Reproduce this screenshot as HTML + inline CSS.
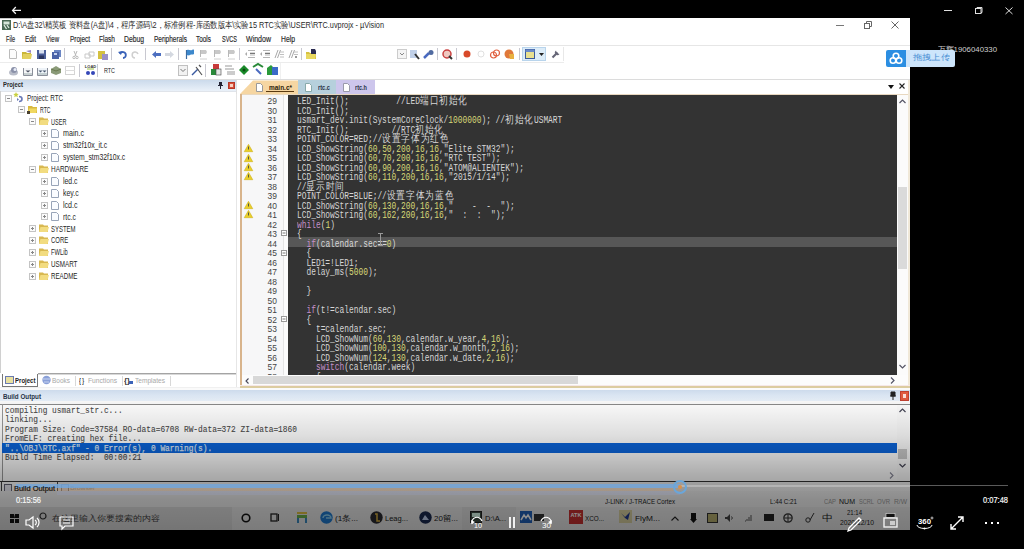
<!DOCTYPE html>
<html><head><meta charset="utf-8">
<style>
*{margin:0;padding:0;box-sizing:border-box}
html,body{width:1024px;height:549px;overflow:hidden;background:#000;font-family:"Liberation Sans",sans-serif}
.a{position:absolute}
svg.a{overflow:visible}
.t{position:absolute;white-space:pre;line-height:1;transform-origin:0 50%}
.code{position:absolute;white-space:pre;font-family:"Liberation Mono",monospace;font-size:10px;line-height:9.5px;transform-origin:0 0;transform:scaleX(0.788);color:#d6d6d6}
.code .n{color:#d8d878}
.code .k{color:#c490c8}
.cj{font-size:10.6px;letter-spacing:1.2px;line-height:0}
.bo{position:absolute;white-space:pre;font-family:"Liberation Mono",monospace;font-size:9.5px;line-height:9.5px;transform-origin:0 0;transform:scaleX(0.826);color:#4a4a4a;font-weight:normal;-webkit-text-stroke:0.1px #4a4a4a}
</style></head><body>

<div class="a" style="left:0px;top:18px;width:910px;height:512px;background:#fff"></div>
<div class="a" style="left:0px;top:18px;width:32px;height:1px;background:#c8c8c8"></div>
<svg class="a" style="left:2px;top:20px;" width="9" height="10" viewBox="0 0 9 10"><rect x="0" y="0" width="9" height="10" fill="#4a6a55"/><rect x="1.5" y="1.5" width="6" height="3" fill="#d6e6da"/><path d="M2 5l2.5 4M5 5l2 3" stroke="#e0ece4" stroke-width="1.3"/></svg>
<div class="t" style="left:13px;top:21.12px;color:#2a2a2a;font-family:'Liberation Sans',sans-serif;font-size:9px;;transform:scaleX(0.8131)">D:\A盘32\精英板 资料盘(A盘)\4，程序源码\2，标准例程-库函数版本\实验15 RTC实验\USER\RTC.uvprojx - µVision</div>
<div class="a" style="left:836px;top:25px;width:8px;height:1px;background:#777"></div>
<svg class="a" style="left:864px;top:21px;" width="8" height="8" viewBox="0 0 8 8"><rect x="0.5" y="2.5" width="5" height="5" fill="none" stroke="#666"/><path d="M2.5 2.5v-2h5v5h-2" fill="none" stroke="#666"/></svg>
<svg class="a" style="left:891px;top:21px;" width="8" height="8" viewBox="0 0 8 8"><path d="M0.5 0.5l7 7M7.5 0.5l-7 7" stroke="#666" stroke-width="1"/></svg>
<div class="t" style="left:6px;top:34.93px;color:#262626;font-family:'Liberation Sans',sans-serif;font-size:8.4px;-webkit-text-stroke:0.15px #262626;transform:scaleX(0.6667)">File</div>
<div class="t" style="left:25px;top:34.93px;color:#262626;font-family:'Liberation Sans',sans-serif;font-size:8.4px;-webkit-text-stroke:0.15px #262626;transform:scaleX(0.7619)">Edit</div>
<div class="t" style="left:46px;top:34.93px;color:#262626;font-family:'Liberation Sans',sans-serif;font-size:8.4px;-webkit-text-stroke:0.15px #262626;transform:scaleX(0.7216)">View</div>
<div class="t" style="left:70px;top:34.93px;color:#262626;font-family:'Liberation Sans',sans-serif;font-size:8.4px;-webkit-text-stroke:0.15px #262626;transform:scaleX(0.7669)">Project</div>
<div class="t" style="left:99px;top:34.93px;color:#262626;font-family:'Liberation Sans',sans-serif;font-size:8.4px;-webkit-text-stroke:0.15px #262626;transform:scaleX(0.7811)">Flash</div>
<div class="t" style="left:124px;top:34.93px;color:#262626;font-family:'Liberation Sans',sans-serif;font-size:8.4px;-webkit-text-stroke:0.15px #262626;transform:scaleX(0.8101)">Debug</div>
<div class="t" style="left:154px;top:34.93px;color:#262626;font-family:'Liberation Sans',sans-serif;font-size:8.4px;-webkit-text-stroke:0.15px #262626;transform:scaleX(0.7788)">Peripherals</div>
<div class="t" style="left:196px;top:34.93px;color:#262626;font-family:'Liberation Sans',sans-serif;font-size:8.4px;-webkit-text-stroke:0.15px #262626;transform:scaleX(0.7668)">Tools</div>
<div class="t" style="left:222px;top:34.93px;color:#262626;font-family:'Liberation Sans',sans-serif;font-size:8.4px;-webkit-text-stroke:0.15px #262626;transform:scaleX(0.6575)">SVCS</div>
<div class="t" style="left:246px;top:34.93px;color:#262626;font-family:'Liberation Sans',sans-serif;font-size:8.4px;-webkit-text-stroke:0.15px #262626;transform:scaleX(0.8390)">Window</div>
<div class="t" style="left:281px;top:34.93px;color:#262626;font-family:'Liberation Sans',sans-serif;font-size:8.4px;-webkit-text-stroke:0.15px #262626;transform:scaleX(0.8123)">Help</div>
<div class="a" style="left:0px;top:45px;width:910px;height:1px;background:#e6e6e6"></div>
<svg class="a" style="left:9px;top:49px;" width="8" height="10" viewBox="0 0 8 10"><path d="M0.5 0.5h5l2 2v7h-7z" fill="#fcfcfc" stroke="#bbb"/></svg>
<svg class="a" style="left:22px;top:50px;" width="10" height="9" viewBox="0 0 10 9"><path d="M0 2h4l1 1h4v6h-9z" fill="#c9b53a"/><path d="M4 1l5 -1v3" fill="#9a88c8"/><path d="M1 4h9l-1 5h-9z" fill="#e2d060"/></svg>
<svg class="a" style="left:37px;top:50px;" width="9" height="9" viewBox="0 0 9 9"><rect x="0" y="0" width="9" height="9" fill="#4c5f9a"/><rect x="2" y="0" width="5" height="3.5" fill="#d8e0f0"/><rect x="2" y="5.5" width="5" height="3.5" fill="#2a3560"/></svg>
<svg class="a" style="left:52px;top:50px;" width="9" height="9" viewBox="0 0 9 9"><path d="M2 0h7v7h-7z" fill="#6b86c4"/><path d="M0 2h7v7h-7z" fill="#4a63a8"/><path d="M2 3h3v2h-3z" fill="#c8d4f0"/></svg>
<div class="a" style="left:64px;top:48px;width:1px;height:12px;background:#c8c8d0"></div>
<svg class="a" style="left:73px;top:51px;" width="5" height="8" viewBox="0 0 5 8"><path d="M1 0l2 5M4 0l-2 5" stroke="#b8b8b8"/><circle cx="1" cy="6.5" r="1.2" fill="none" stroke="#bbb"/><circle cx="4" cy="6.5" r="1.2" fill="none" stroke="#bbb"/></svg>
<svg class="a" style="left:85px;top:51px;" width="9" height="8" viewBox="0 0 9 8"><path d="M0 3h5v4h-5zM4 1h5v4h-5z" fill="none" stroke="#c8c8c8"/></svg>
<svg class="a" style="left:98px;top:50px;" width="10" height="10" viewBox="0 0 10 10"><rect x="0" y="1" width="7" height="8" fill="#d4c040"/><rect x="4" y="4" width="6" height="6" fill="#9a90c8"/></svg>
<div class="a" style="left:111px;top:48px;width:1px;height:12px;background:#c8c8d0"></div>
<svg class="a" style="left:118px;top:50px;" width="8" height="9" viewBox="0 0 8 9"><path d="M2 4a3 3 0 1 1 3 4" stroke="#3a62b8" stroke-width="1.8" fill="none"/><path d="M0 2l3 3 1-4z" fill="#3a62b8"/></svg>
<svg class="a" style="left:132px;top:50px;" width="8" height="9" viewBox="0 0 8 9"><path d="M6 4a3 3 0 1 0 -3 4" stroke="#cfcfcf" stroke-width="1.5" fill="none"/></svg>
<div class="a" style="left:145px;top:48px;width:1px;height:12px;background:#c8c8d0"></div>
<svg class="a" style="left:152px;top:51px;" width="9" height="7" viewBox="0 0 9 7"><path d="M0 3.5l4-3.5v2h5v3h-5v2z" fill="#4d6fc0"/></svg>
<svg class="a" style="left:165px;top:51px;" width="9" height="7" viewBox="0 0 9 7"><path d="M9 3.5l-4-3.5v2h-5v3h5v2z" fill="#d4d8e0"/></svg>
<div class="a" style="left:178px;top:48px;width:1px;height:12px;background:#c8c8d0"></div>
<svg class="a" style="left:185px;top:49px;" width="10" height="11" viewBox="0 0 10 11"><path d="M1.5 1v9" stroke="#3a6aa0" stroke-width="1.2"/><path d="M2 1c2-1 3 1 5 0s2 0 2 0v4c-1 1-3 0-4 1s-3 0-3 0z" fill="#3d88cc"/></svg>
<svg class="a" style="left:199px;top:49px;" width="10" height="11" viewBox="0 0 10 11"><path d="M1.5 1v7" stroke="#b8b8b8"/><path d="M2 1h5l1 2-1 2h-5z" fill="#c8c8c8"/><path d="M1 10h7" stroke="#d0d0d0"/></svg>
<svg class="a" style="left:213px;top:49px;" width="10" height="11" viewBox="0 0 10 11"><path d="M1.5 1v7" stroke="#b8b8b8"/><path d="M2 1h5l1 2-1 2h-5z" fill="#c8c8c8"/><path d="M1 10h7" stroke="#d0d0d0"/></svg>
<svg class="a" style="left:227px;top:49px;" width="10" height="11" viewBox="0 0 10 11"><path d="M1.5 1v7" stroke="#b8b8b8"/><path d="M2 1h5l1 2-1 2h-5z" fill="#c8c8c8"/><path d="M1 10h7" stroke="#d0d0d0"/></svg>
<div class="a" style="left:239px;top:48px;width:1px;height:12px;background:#c8c8d0"></div>
<svg class="a" style="left:245px;top:49px;" width="10" height="10" viewBox="0 0 10 10"><path d="M3 1.5h7M5 4h5M5 6h5M3 8.5h7" stroke="#b4b4b4"/><path d="M5 4.5h5" stroke="#777"/><path d="M0 5l2-2v4z" fill="#aaa"/></svg>
<svg class="a" style="left:260px;top:49px;" width="10" height="10" viewBox="0 0 10 10"><path d="M3 1.5h7M5 4h5M5 6h5M3 8.5h7" stroke="#b4b4b4"/><path d="M5 4.5h5" stroke="#777"/><path d="M0 5l2-2v4z" fill="#aaa"/></svg>
<svg class="a" style="left:274px;top:49px;" width="10" height="10" viewBox="0 0 10 10"><path d="M1 9l3-8M3.5 9l3-8" stroke="#a8a8a8"/><path d="M6 3h4M6 5.5h4M6 8h4" stroke="#c0c0c0"/></svg>
<svg class="a" style="left:288px;top:49px;" width="10" height="10" viewBox="0 0 10 10"><path d="M1 9l3-8M3.5 9l3-8" stroke="#a8a8a8"/><path d="M6 3h4M6 5.5h4" stroke="#c0c0c0"/><path d="M7 7l2 2M9 7l-2 2" stroke="#999"/></svg>
<div class="a" style="left:301px;top:48px;width:1px;height:12px;background:#c8c8d0"></div>
<svg class="a" style="left:306px;top:49px;" width="11" height="10" viewBox="0 0 11 10"><path d="M0 3h3l1 1h6v6h-10z" fill="#d6c040"/><path d="M5 0h4l1 2v4h-5z" fill="#2a2a50"/><path d="M0 5h10l-1 5h-9z" fill="#e8d860"/></svg>
<svg class="a" style="left:397px;top:49px;" width="10" height="10" viewBox="0 0 10 10"><rect x="0.5" y="0.5" width="9" height="9" fill="#f4f4f4" stroke="#ccc"/><path d="M3 4l2 2 2-2" stroke="#888" fill="none"/></svg>
<svg class="a" style="left:410px;top:49px;" width="10" height="11" viewBox="0 0 10 11"><rect x="0" y="1" width="7" height="8" fill="#c0d0e8"/><path d="M5 5l4 5" stroke="#333" stroke-width="2"/></svg>
<svg class="a" style="left:424px;top:50px;" width="10" height="9" viewBox="0 0 10 9"><path d="M0 8l5-5" stroke="#4a6ac0" stroke-width="2.5"/><circle cx="7" cy="2.5" r="2.5" fill="#506aa0"/></svg>
<div class="a" style="left:437px;top:48px;width:1px;height:12px;background:#c8c8d0"></div>
<svg class="a" style="left:442px;top:49px;" width="11" height="11" viewBox="0 0 11 11"><circle cx="5" cy="5" r="4" fill="#f0c8c0" stroke="#c84040" stroke-width="1.5"/><path d="M7 7l3 3" stroke="#333" stroke-width="2"/></svg>
<div class="a" style="left:456px;top:48px;width:1px;height:12px;background:#c8c8d0"></div>
<svg class="a" style="left:463px;top:50px;" width="8" height="8" viewBox="0 0 8 8"><circle cx="4" cy="4" r="3.5" fill="#d84a2a"/></svg>
<svg class="a" style="left:477px;top:50px;" width="8" height="8" viewBox="0 0 8 8"><circle cx="4" cy="4" r="3" fill="none" stroke="#e0e0e0"/></svg>
<svg class="a" style="left:490px;top:49px;" width="10" height="10" viewBox="0 0 10 10"><circle cx="3.5" cy="6" r="3" fill="none" stroke="#e06040" stroke-width="1.2"/><circle cx="6.5" cy="4" r="3" fill="none" stroke="#e06040" stroke-width="1.2"/></svg>
<svg class="a" style="left:504px;top:49px;" width="10" height="10" viewBox="0 0 10 10"><circle cx="5" cy="5" r="4.5" fill="#e0783a"/><path d="M5 5h5v5h-4z" fill="#e8b040"/></svg>
<div class="a" style="left:519px;top:48px;width:1px;height:12px;background:#c8c8d0"></div>
<div class="a" style="left:522px;top:47px;width:24px;height:14px;background:#dcecf8;border:1px solid #b8d4ec"></div>
<svg class="a" style="left:525px;top:49px;" width="10" height="10" viewBox="0 0 10 10"><rect x="0.5" y="0.5" width="9" height="9" fill="#e8e090" stroke="#3a5a9a"/><rect x="0.5" y="0.5" width="9" height="2.5" fill="#6a8ac8"/></svg>
<svg class="a" style="left:539px;top:53px;" width="5" height="3" viewBox="0 0 5 3"><path d="M0 0h5l-2.5 3z" fill="#222"/></svg>
<svg class="a" style="left:551px;top:49px;" width="10" height="10" viewBox="0 0 10 10"><path d="M1.5 8.5l5-5" stroke="#667" stroke-width="2.2"/><path d="M5 1.5a2.5 2.5 0 1 0 3.5 3.5l-1.5-0.5-1.5-1.5z" fill="#667"/></svg>
<div class="a" style="left:563px;top:47px;width:1px;height:14px;background:#e8e8e8"></div>
<div class="a" style="left:0px;top:62px;width:564px;height:1px;background:#ececec"></div>
<svg class="a" style="left:9px;top:66px;" width="9" height="10" viewBox="0 0 9 10"><ellipse cx="4.5" cy="6.5" rx="4.5" ry="3" fill="#b8bcc8"/><circle cx="5" cy="4" r="3" fill="#8a90a8"/><circle cx="6" cy="3.5" r="1.5" fill="#e8ecf8"/></svg>
<svg class="a" style="left:23px;top:66px;" width="10" height="10" viewBox="0 0 10 10"><path d="M0.5 2v7.5h9v-7.5" stroke="#8a8f9a" fill="#f6f7f9"/><path d="M2.5 4.5l2.5 2 2.5-2z" fill="#4a5060"/><path d="M1 8h8" stroke="#9aa"/></svg>
<svg class="a" style="left:37px;top:66px;" width="11" height="10" viewBox="0 0 11 10"><path d="M0.5 2v7.5h10v-7.5" stroke="#8a8f9a" fill="#eef3f8"/><path d="M1.5 4.5l2 2 2-2zM5.5 4.5l2 2 2-2z" fill="#4a5a70"/><path d="M1 8h9" stroke="#9aa"/></svg>
<svg class="a" style="left:51px;top:65px;" width="10" height="10" viewBox="0 0 10 10"><path d="M0 4l5-3 5 3v4l-5 2-5-2z" fill="#8a9a78"/><path d="M0 4l5 2 5-2" stroke="#6a7a50" fill="none"/></svg>
<svg class="a" style="left:65px;top:66px;" width="10" height="9" viewBox="0 0 10 9"><rect x="0.5" y="0.5" width="9" height="8" fill="none" stroke="#d4d4d4"/><path d="M0 4.5h10" stroke="#dcdcdc"/></svg>
<div class="a" style="left:79px;top:64px;width:1px;height:13px;background:#c8c8d0"></div>
<svg class="a" style="left:85px;top:64px;" width="11" height="12" viewBox="0 0 11 12"><text x="5.5" y="4" font-size="4" text-anchor="middle" font-family="Liberation Sans" font-weight="bold" fill="#333">LOAD</text><circle cx="3" cy="9" r="2" fill="#3446b8"/><circle cx="8" cy="9" r="2" fill="#3446b8"/><path d="M2 5h7" stroke="#9ac040"/></svg>
<div class="a" style="left:97px;top:64px;width:1px;height:13px;background:#c8c8d0"></div>
<div class="t" style="left:104px;top:66.60px;color:#222;font-family:'Liberation Sans',sans-serif;font-size:7.5px;;transform:scaleX(0.7198)">RTC</div>
<svg class="a" style="left:178px;top:65px;" width="10" height="11" viewBox="0 0 10 11"><rect x="0.5" y="0.5" width="9" height="10" fill="#f2f2f2" stroke="#c0c0c0"/><path d="M2.5 4l2.5 2.5 2.5-2.5" stroke="#777" fill="none"/></svg>
<svg class="a" style="left:192px;top:65px;" width="11" height="11" viewBox="0 0 11 11"><path d="M0 10l6-6" stroke="#3a5aa0" stroke-width="1.5"/><path d="M4 2l6 8M7 0l2 2" stroke="#555" stroke-width="1.2"/></svg>
<div class="a" style="left:205px;top:64px;width:1px;height:13px;background:#c8c8d0"></div>
<svg class="a" style="left:211px;top:64px;" width="10" height="11" viewBox="0 0 10 11"><rect x="2" y="0" width="6" height="5" fill="#c83a3a"/><rect x="0" y="5" width="5" height="6" fill="#2a8a3a"/><rect x="5" y="5" width="5" height="6" fill="#e8e8e8" stroke="#444" stroke-width=".6"/></svg>
<svg class="a" style="left:225px;top:65px;" width="10" height="10" viewBox="0 0 10 10"><path d="M0 1h7M0 4h9M2 7h8M2 9h8" stroke="#999"/></svg>
<svg class="a" style="left:239px;top:65px;" width="10" height="10" viewBox="0 0 10 10"><path d="M5 0l5 5-5 5-5-5z" fill="#1a8a2a"/><circle cx="5" cy="5" r="1.5" fill="#0a4a10"/></svg>
<svg class="a" style="left:253px;top:64px;" width="11" height="11" viewBox="0 0 11 11"><path d="M0 3l5-3 5 3" stroke="#2a8a3a" stroke-width="2" fill="none"/><path d="M3 5l5 5" stroke="#4a6ac0" stroke-width="2"/></svg>
<svg class="a" style="left:267px;top:64px;" width="11" height="11" viewBox="0 0 11 11"><path d="M0 4l4-3 3 3v7h-7z" fill="#2a9a3a"/><rect x="5" y="3" width="6" height="8" fill="#3a6ac8"/></svg>
<div class="a" style="left:280px;top:63px;width:1px;height:16px;background:#f0f0f0"></div>
<div class="a" style="left:0px;top:79px;width:910px;height:1px;background:#dcdcdc"></div>
<div class="a" style="left:0px;top:80px;width:236px;height:11px;background:linear-gradient(#cbdaeb,#eaf1f9)"></div>
<div class="a" style="left:0px;top:91px;width:236px;height:1px;background:#e0e4ea"></div>
<div class="t" style="left:3px;top:81.14px;color:#2a2a2a;font-family:'Liberation Sans',sans-serif;font-size:8px;font-weight:bold;transform:scaleX(0.7373)">Project</div>
<svg class="a" style="left:218px;top:82px;" width="5" height="7" viewBox="0 0 5 7"><path d="M1 0h3v3.5h-3z" fill="#223"/><path d="M0 3.5h5M2.5 3.5v3.5" stroke="#223"/></svg>
<div class="a" style="left:228px;top:82px;width:7px;height:7px;background:#d8503a;border:1px solid #b83828"></div>
<div class="a" style="left:230px;top:84px;width:3px;height:3px;background:#f8d0c0"></div>
<div class="a" style="left:0px;top:91px;width:1px;height:282px;background:#d0d0d0"></div>
<div class="a" style="left:236px;top:80px;width:1px;height:308px;background:#e0e0e0"></div>
<svg class="a" style="left:5px;top:95px;" width="7" height="7" viewBox="0 0 7 7"><rect x="0.5" y="0.5" width="6" height="6" fill="#fbfbfb" stroke="#c4c4c4"/><path d="M2 3.5h3" stroke="#888" stroke-width="1"/></svg>
<svg class="a" style="left:13px;top:92px;" width="11" height="11" viewBox="0 0 11 11"><path d="M3 0l0.8 1.8 2 .2-1.5 1.3.5 2-1.8-1-1.8 1 .5-2-1.5-1.3 2-.2z" fill="#c8d040"/><path d="M6 4.5c2 0 3 1 3 2.5s-1 2.5-3 2.5" stroke="#6a7ab8" stroke-width="1.6" fill="none"/><path d="M4 6l2 1.5-2 1.5" fill="#6a7ab8"/></svg>
<div class="t" style="left:27.3px;top:94.84px;color:#262626;font-family:'Liberation Sans',sans-serif;font-size:8.2px;;transform:scaleX(0.7748)">Project: RTC</div>
<svg class="a" style="left:18px;top:106px;" width="7" height="7" viewBox="0 0 7 7"><rect x="0.5" y="0.5" width="6" height="6" fill="#fbfbfb" stroke="#c4c4c4"/><path d="M2 3.5h3" stroke="#888" stroke-width="1"/></svg>
<svg class="a" style="left:27px;top:105px;" width="10" height="9" viewBox="0 0 10 9"><path d="M1 1h4l1 1h4v6h-9z" fill="#d8b840"/><path d="M2 3.5h8l-1 4.5h-8z" fill="#f0d860"/><path d="M0 6h3v3h-3z" fill="#4a4030"/></svg>
<div class="t" style="left:39.5px;top:106.72px;color:#262626;font-family:'Liberation Sans',sans-serif;font-size:8.2px;;transform:scaleX(0.6292)">RTC</div>
<svg class="a" style="left:29px;top:118px;" width="7" height="7" viewBox="0 0 7 7"><rect x="0.5" y="0.5" width="6" height="6" fill="#fbfbfb" stroke="#c4c4c4"/><path d="M2 3.5h3" stroke="#888" stroke-width="1"/></svg>
<svg class="a" style="left:39px;top:117px;" width="10" height="8" viewBox="0 0 10 8"><path d="M0 0.5h4l1 1h4v6.5h-9z" fill="#d8b850"/><path d="M1.5 3h8.5l-1.5 5h-8.5z" fill="#f2dc80"/></svg>
<div class="t" style="left:51.2px;top:118.60px;color:#262626;font-family:'Liberation Sans',sans-serif;font-size:8.2px;;transform:scaleX(0.6769)">USER</div>
<svg class="a" style="left:41px;top:130px;" width="7" height="7" viewBox="0 0 7 7"><rect x="0.5" y="0.5" width="6" height="6" fill="#fbfbfb" stroke="#c4c4c4"/><path d="M2 3.5h3M3.5 2v3" stroke="#888" stroke-width="1"/></svg>
<svg class="a" style="left:51px;top:129px;" width="8" height="9" viewBox="0 0 8 9"><path d="M0.5 0.5h5l2 2v6h-7z" fill="#fafcff" stroke="#98a4b8"/></svg>
<div class="t" style="left:62.8px;top:130.48px;color:#262626;font-family:'Liberation Sans',sans-serif;font-size:8.2px;;transform:scaleX(0.8705)">main.c</div>
<svg class="a" style="left:41px;top:142px;" width="7" height="7" viewBox="0 0 7 7"><rect x="0.5" y="0.5" width="6" height="6" fill="#fbfbfb" stroke="#c4c4c4"/><path d="M2 3.5h3M3.5 2v3" stroke="#888" stroke-width="1"/></svg>
<svg class="a" style="left:51px;top:141px;" width="8" height="9" viewBox="0 0 8 9"><path d="M0.5 0.5h5l2 2v6h-7z" fill="#fafcff" stroke="#98a4b8"/></svg>
<div class="t" style="left:62.8px;top:142.36px;color:#262626;font-family:'Liberation Sans',sans-serif;font-size:8.2px;;transform:scaleX(0.8372)">stm32f10x_it.c</div>
<svg class="a" style="left:41px;top:154px;" width="7" height="7" viewBox="0 0 7 7"><rect x="0.5" y="0.5" width="6" height="6" fill="#fbfbfb" stroke="#c4c4c4"/><path d="M2 3.5h3M3.5 2v3" stroke="#888" stroke-width="1"/></svg>
<svg class="a" style="left:51px;top:153px;" width="8" height="9" viewBox="0 0 8 9"><path d="M0.5 0.5h5l2 2v6h-7z" fill="#fafcff" stroke="#98a4b8"/></svg>
<div class="t" style="left:62.8px;top:154.24px;color:#262626;font-family:'Liberation Sans',sans-serif;font-size:8.2px;;transform:scaleX(0.8335)">system_stm32f10x.c</div>
<svg class="a" style="left:29px;top:166px;" width="7" height="7" viewBox="0 0 7 7"><rect x="0.5" y="0.5" width="6" height="6" fill="#fbfbfb" stroke="#c4c4c4"/><path d="M2 3.5h3" stroke="#888" stroke-width="1"/></svg>
<svg class="a" style="left:39px;top:165px;" width="10" height="8" viewBox="0 0 10 8"><path d="M0 0.5h4l1 1h4v6.5h-9z" fill="#d8b850"/><path d="M1.5 3h8.5l-1.5 5h-8.5z" fill="#f2dc80"/></svg>
<div class="t" style="left:51.2px;top:166.12px;color:#262626;font-family:'Liberation Sans',sans-serif;font-size:8.2px;;transform:scaleX(0.7879)">HARDWARE</div>
<svg class="a" style="left:41px;top:178px;" width="7" height="7" viewBox="0 0 7 7"><rect x="0.5" y="0.5" width="6" height="6" fill="#fbfbfb" stroke="#c4c4c4"/><path d="M2 3.5h3M3.5 2v3" stroke="#888" stroke-width="1"/></svg>
<svg class="a" style="left:51px;top:177px;" width="8" height="9" viewBox="0 0 8 9"><path d="M0.5 0.5h5l2 2v6h-7z" fill="#fafcff" stroke="#98a4b8"/></svg>
<div class="t" style="left:62.8px;top:178.00px;color:#262626;font-family:'Liberation Sans',sans-serif;font-size:8.2px;;transform:scaleX(0.8383)">led.c</div>
<svg class="a" style="left:41px;top:190px;" width="7" height="7" viewBox="0 0 7 7"><rect x="0.5" y="0.5" width="6" height="6" fill="#fbfbfb" stroke="#c4c4c4"/><path d="M2 3.5h3M3.5 2v3" stroke="#888" stroke-width="1"/></svg>
<svg class="a" style="left:51px;top:189px;" width="8" height="9" viewBox="0 0 8 9"><path d="M0.5 0.5h5l2 2v6h-7z" fill="#fafcff" stroke="#98a4b8"/></svg>
<div class="t" style="left:62.8px;top:189.88px;color:#262626;font-family:'Liberation Sans',sans-serif;font-size:8.2px;;transform:scaleX(0.8425)">key.c</div>
<svg class="a" style="left:41px;top:202px;" width="7" height="7" viewBox="0 0 7 7"><rect x="0.5" y="0.5" width="6" height="6" fill="#fbfbfb" stroke="#c4c4c4"/><path d="M2 3.5h3M3.5 2v3" stroke="#888" stroke-width="1"/></svg>
<svg class="a" style="left:51px;top:201px;" width="8" height="9" viewBox="0 0 8 9"><path d="M0.5 0.5h5l2 2v6h-7z" fill="#fafcff" stroke="#98a4b8"/></svg>
<div class="t" style="left:62.8px;top:201.76px;color:#262626;font-family:'Liberation Sans',sans-serif;font-size:8.2px;;transform:scaleX(0.8609)">lcd.c</div>
<svg class="a" style="left:41px;top:213px;" width="7" height="7" viewBox="0 0 7 7"><rect x="0.5" y="0.5" width="6" height="6" fill="#fbfbfb" stroke="#c4c4c4"/><path d="M2 3.5h3M3.5 2v3" stroke="#888" stroke-width="1"/></svg>
<svg class="a" style="left:51px;top:212px;" width="8" height="9" viewBox="0 0 8 9"><path d="M0.5 0.5h5l2 2v6h-7z" fill="#fafcff" stroke="#98a4b8"/></svg>
<div class="t" style="left:62.8px;top:213.64px;color:#262626;font-family:'Liberation Sans',sans-serif;font-size:8.2px;;transform:scaleX(0.8404)">rtc.c</div>
<svg class="a" style="left:29px;top:225px;" width="7" height="7" viewBox="0 0 7 7"><rect x="0.5" y="0.5" width="6" height="6" fill="#fbfbfb" stroke="#c4c4c4"/><path d="M2 3.5h3M3.5 2v3" stroke="#888" stroke-width="1"/></svg>
<svg class="a" style="left:39px;top:224px;" width="10" height="8" viewBox="0 0 10 8"><path d="M0 0.5h4l1 1h4v6.5h-9z" fill="#d8b850"/><path d="M1.5 3h8.5l-1.5 5h-8.5z" fill="#f2dc80"/></svg>
<div class="t" style="left:51.2px;top:225.52px;color:#262626;font-family:'Liberation Sans',sans-serif;font-size:8.2px;;transform:scaleX(0.7306)">SYSTEM</div>
<svg class="a" style="left:29px;top:237px;" width="7" height="7" viewBox="0 0 7 7"><rect x="0.5" y="0.5" width="6" height="6" fill="#fbfbfb" stroke="#c4c4c4"/><path d="M2 3.5h3M3.5 2v3" stroke="#888" stroke-width="1"/></svg>
<svg class="a" style="left:39px;top:236px;" width="10" height="8" viewBox="0 0 10 8"><path d="M0 0.5h4l1 1h4v6.5h-9z" fill="#d8b850"/><path d="M1.5 3h8.5l-1.5 5h-8.5z" fill="#f2dc80"/></svg>
<div class="t" style="left:51.2px;top:237.40px;color:#262626;font-family:'Liberation Sans',sans-serif;font-size:8.2px;;transform:scaleX(0.7313)">CORE</div>
<svg class="a" style="left:29px;top:249px;" width="7" height="7" viewBox="0 0 7 7"><rect x="0.5" y="0.5" width="6" height="6" fill="#fbfbfb" stroke="#c4c4c4"/><path d="M2 3.5h3M3.5 2v3" stroke="#888" stroke-width="1"/></svg>
<svg class="a" style="left:39px;top:248px;" width="10" height="8" viewBox="0 0 10 8"><path d="M0 0.5h4l1 1h4v6.5h-9z" fill="#d8b850"/><path d="M1.5 3h8.5l-1.5 5h-8.5z" fill="#f2dc80"/></svg>
<div class="t" style="left:51.2px;top:249.28px;color:#262626;font-family:'Liberation Sans',sans-serif;font-size:8.2px;;transform:scaleX(0.7017)">FWLib</div>
<svg class="a" style="left:29px;top:261px;" width="7" height="7" viewBox="0 0 7 7"><rect x="0.5" y="0.5" width="6" height="6" fill="#fbfbfb" stroke="#c4c4c4"/><path d="M2 3.5h3M3.5 2v3" stroke="#888" stroke-width="1"/></svg>
<svg class="a" style="left:39px;top:260px;" width="10" height="8" viewBox="0 0 10 8"><path d="M0 0.5h4l1 1h4v6.5h-9z" fill="#d8b850"/><path d="M1.5 3h8.5l-1.5 5h-8.5z" fill="#f2dc80"/></svg>
<div class="t" style="left:51.2px;top:261.16px;color:#262626;font-family:'Liberation Sans',sans-serif;font-size:8.2px;;transform:scaleX(0.7670)">USMART</div>
<svg class="a" style="left:29px;top:273px;" width="7" height="7" viewBox="0 0 7 7"><rect x="0.5" y="0.5" width="6" height="6" fill="#fbfbfb" stroke="#c4c4c4"/><path d="M2 3.5h3M3.5 2v3" stroke="#888" stroke-width="1"/></svg>
<svg class="a" style="left:39px;top:272px;" width="10" height="8" viewBox="0 0 10 8"><path d="M0 0.5h4l1 1h4v6.5h-9z" fill="#d8b850"/><path d="M1.5 3h8.5l-1.5 5h-8.5z" fill="#f2dc80"/></svg>
<div class="t" style="left:51.2px;top:273.04px;color:#262626;font-family:'Liberation Sans',sans-serif;font-size:8.2px;;transform:scaleX(0.7536)">README</div>
<div class="a" style="left:38px;top:373px;width:199px;height:1px;background:#a4a4a4"></div>
<div class="a" style="left:38px;top:374px;width:199px;height:1px;background:#d8d8d8"></div>
<div class="a" style="left:1px;top:373px;width:37px;height:1px;background:#fff"></div>
<div class="a" style="left:2px;top:374px;width:36px;height:13px;background:#fff;border-left:1px solid #777;border-right:1px solid #777;border-bottom:1px solid #777"></div>
<svg class="a" style="left:5px;top:376px;" width="9" height="8" viewBox="0 0 9 8"><rect x="0.5" y="0.5" width="8" height="7" fill="#e8e0a0" stroke="#6a7ab0"/></svg>
<div class="t" style="left:14.5px;top:376.60px;color:#222;font-family:'Liberation Sans',sans-serif;font-size:7.5px;font-weight:bold;transform:scaleX(0.8059)">Project</div>
<svg class="a" style="left:42px;top:375px;" width="9" height="10" viewBox="0 0 9 10"><circle cx="4.5" cy="5" r="4.2" fill="#8aa0d8"/><path d="M1 4h7M2 7h5" stroke="#c8d4f0"/></svg>
<div class="t" style="left:52px;top:376.60px;color:#a8a8a8;font-family:'Liberation Sans',sans-serif;font-size:7.5px;;transform:scaleX(0.8629)">Books</div>
<div class="a" style="left:75px;top:376px;width:1px;height:10px;background:#d8d8d8"></div>
<div class="t" style="left:79px;top:376.60px;color:#333;font-family:'Liberation Sans',sans-serif;font-size:7.5px;font-weight:bold;transform:scaleX(0.6312)">{ }</div>
<div class="t" style="left:88px;top:376.60px;color:#a8a8a8;font-family:'Liberation Sans',sans-serif;font-size:7.5px;;transform:scaleX(0.8915)">Functions</div>
<div class="a" style="left:122px;top:376px;width:1px;height:10px;background:#d8d8d8"></div>
<div class="t" style="left:124px;top:376.60px;color:#333;font-family:'Liberation Sans',sans-serif;font-size:7.5px;font-weight:bold;transform:scaleX(1.0267)">{}</div>
<div class="a" style="left:129px;top:381px;width:4px;height:3px;background:#3a62b8"></div>
<div class="t" style="left:135px;top:376.60px;color:#a8a8a8;font-family:'Liberation Sans',sans-serif;font-size:7.5px;;transform:scaleX(0.8775)">Templates</div>
<div class="a" style="left:170px;top:376px;width:1px;height:10px;background:#d8d8d8"></div>
<div class="a" style="left:240px;top:80px;width:670px;height:14px;background:#fff"></div>
<svg class="a" style="left:240px;top:80px;" width="58" height="14" viewBox="0 0 58 14"><path d="M0 14l13-13.5h45v13.5z" fill="#f6d6a2"/></svg>
<svg class="a" style="left:256px;top:83px;" width="7" height="9" viewBox="0 0 7 9"><path d="M0.5 0.5h4l2 2v6h-6z" fill="#fff" stroke="#999"/></svg>
<div class="t" style="left:269px;top:83.50px;color:#2a1a08;font-family:'Liberation Sans',sans-serif;font-size:7.5px;font-weight:bold;transform:scaleX(0.8618)">main.c*</div>
<div class="a" style="left:266px;top:91px;width:28px;height:1px;background:#5a3a10"></div>
<div class="a" style="left:298px;top:80px;width:38px;height:14px;background:#b6d0dc"></div>
<svg class="a" style="left:305px;top:83px;" width="7" height="9" viewBox="0 0 7 9"><path d="M0.5 0.5h4l2 2v6h-6z" fill="#fff" stroke="#8aa"/></svg>
<div class="t" style="left:318px;top:83.50px;color:#2a3448;font-family:'Liberation Sans',sans-serif;font-size:7.5px;font-weight:bold;transform:scaleX(0.7574)">rtc.c</div>
<div class="a" style="left:336px;top:80px;width:39px;height:14px;background:#cdc6ec"></div>
<svg class="a" style="left:343px;top:83px;" width="7" height="9" viewBox="0 0 7 9"><path d="M0.5 0.5h4l2 2v6h-6z" fill="#fff" stroke="#99a"/></svg>
<div class="t" style="left:355px;top:83.50px;color:#2a3448;font-family:'Liberation Sans',sans-serif;font-size:7.5px;font-weight:bold;transform:scaleX(0.7378)">rtc.h</div>
<svg class="a" style="left:888px;top:85px;" width="6" height="4" viewBox="0 0 6 4"><path d="M0 0h6l-3 4z" fill="#111"/></svg>
<svg class="a" style="left:899px;top:83px;" width="6" height="6" viewBox="0 0 6 6"><path d="M0.5 0.5l5 5M5.5 0.5l-5 5" stroke="#222" stroke-width="1.1"/></svg>
<div class="a" style="left:240px;top:94px;width:670px;height:1px;background:#e8d8c0"></div>
<div class="a" style="left:236px;top:94px;width:1px;height:293px;background:#e6e6e6"></div>
<div class="a" style="left:240px;top:94px;width:2px;height:293px;background:#d8b48c"></div>
<div class="a" style="left:242px;top:95px;width:41px;height:280px;background:#f7f7f8"></div>
<div class="a" style="left:283px;top:95px;width:5px;height:280px;background:#fbfbfb"></div>
<div class="a" style="left:283px;top:95px;width:1px;height:280px;background:#e4e4e4"></div>
<div class="a" style="left:288px;top:95px;width:609px;height:280px;background:#333333"></div>
<div class="a" style="left:288px;top:237px;width:609px;height:10px;background:#575757"></div>
<div class="a" style="left:897px;top:95px;width:11px;height:280px;background:#fbfbfb"></div>
<div class="a" style="left:908px;top:80px;width:2px;height:308px;background:#f0e8d8"></div>
<svg class="a" style="left:899px;top:99px;" width="7" height="5" viewBox="0 0 7 5"><path d="M0.5 4l3-3 3 3" stroke="#556" fill="none" stroke-width="1.2"/></svg>
<div class="a" style="left:898px;top:187px;width:9px;height:82px;background:#dadada"></div>
<svg class="a" style="left:899px;top:364px;" width="7" height="5" viewBox="0 0 7 5"><path d="M0.5 1l3 3 3-3" stroke="#556" fill="none" stroke-width="1.2"/></svg>
<div class="a" style="left:242px;top:375px;width:666px;height:10px;background:#fcfcfc"></div>
<svg class="a" style="left:245px;top:378px;" width="5" height="6" viewBox="0 0 5 6"><path d="M3.5 0.5l-2.5 2.5 2.5 2.5" stroke="#445" fill="none" stroke-width="1.1"/></svg>
<div class="a" style="left:253px;top:376px;width:325px;height:8px;background:#d8d8d8"></div>
<svg class="a" style="left:890px;top:377px;" width="5" height="7" viewBox="0 0 5 7"><path d="M1 0.5l3 3-3 3" stroke="#556" fill="none" stroke-width="1.2"/></svg>
<div class="a" style="left:240px;top:385px;width:670px;height:1px;background:#f6e8e8"></div>
<div class="a" style="left:240px;top:386px;width:670px;height:2px;background:#dccca0"></div>
<div class="a" style="left:0px;top:387px;width:240px;height:1px;background:#f0f0f0"></div>
<div class="a" style="left:242px;top:95px;width:41px;height:280px;overflow:hidden"><div style="position:absolute;right:6px;top:1.2px;width:30px;text-align:right;white-space:pre;font-family:'Liberation Sans',sans-serif;font-size:9.6px;line-height:9.5px;color:#444;transform:scaleX(0.88);transform-origin:100% 0">29
30
31
32
33
34
35
36
37
38
39
40
41
42
43
44
45
46
47
48
49
50
51
52
53
54
55
56
57
58</div></div>
<svg class="a" style="left:281px;top:230px;" width="6" height="6" viewBox="0 0 6 6"><rect x="0.5" y="0.5" width="5" height="5" fill="#fff" stroke="#999"/><path d="M1.5 3h3" stroke="#555" stroke-width=".8"/></svg>
<svg class="a" style="left:281px;top:250px;" width="6" height="6" viewBox="0 0 6 6"><rect x="0.5" y="0.5" width="5" height="5" fill="#fff" stroke="#999"/><path d="M1.5 3h3" stroke="#555" stroke-width=".8"/></svg>
<svg class="a" style="left:281px;top:316px;" width="6" height="6" viewBox="0 0 6 6"><rect x="0.5" y="0.5" width="5" height="5" fill="#fff" stroke="#999"/><path d="M1.5 3h3" stroke="#555" stroke-width=".8"/></svg>
<div class="a" style="left:284px;top:380px;width:1px;height:0px;"></div>
<div class="a" style="left:288px;top:95px;width:609px;height:280px;overflow:hidden"><div class="code" style="left:8.6px;top:2px">LED_Init();          //LED<span class="cj">端口初始化</span>
LCD_Init();
usmart_dev.init(SystemCoreClock/<span class="n">1000000</span>); //<span class="cj">初始化</span>USMART
RTC_Init();         //RTC<span class="cj">初始化</span>
POINT_COLOR=RED;//<span class="cj">设置字体为红色</span>
LCD_ShowString(<span class="n">60</span>,<span class="n">50</span>,<span class="n">200</span>,<span class="n">16</span>,<span class="n">16</span>,"Elite STM32");
LCD_ShowString(<span class="n">60</span>,<span class="n">70</span>,<span class="n">200</span>,<span class="n">16</span>,<span class="n">16</span>,"RTC TEST");
LCD_ShowString(<span class="n">60</span>,<span class="n">90</span>,<span class="n">200</span>,<span class="n">16</span>,<span class="n">16</span>,"ATOM@ALIENTEK");
LCD_ShowString(<span class="n">60</span>,<span class="n">110</span>,<span class="n">200</span>,<span class="n">16</span>,<span class="n">16</span>,"2015/1/14");
//<span class="cj">显示时间</span>
POINT_COLOR=BLUE;//<span class="cj">设置字体为蓝色</span>
LCD_ShowString(<span class="n">60</span>,<span class="n">130</span>,<span class="n">200</span>,<span class="n">16</span>,<span class="n">16</span>,"    -  -  ");
LCD_ShowString(<span class="n">60</span>,<span class="n">162</span>,<span class="n">200</span>,<span class="n">16</span>,<span class="n">16</span>,"  :  :  ");
<span class="k">while</span>(<span class="n">1</span>)
{
  <span class="k">if</span>(calendar.sec==<span class="n">0</span>)
  {
  LED1=!LED1;
  delay_ms(<span class="n">5000</span>);

  }

  <span class="k">if</span>(t!=calendar.sec)
  {
    t=calendar.sec;
    LCD_ShowNum(<span class="n">60</span>,<span class="n">130</span>,calendar.w_year,<span class="n">4</span>,<span class="n">16</span>);
    LCD_ShowNum(<span class="n">100</span>,<span class="n">130</span>,calendar.w_month,<span class="n">2</span>,<span class="n">16</span>);
    LCD_ShowNum(<span class="n">124</span>,<span class="n">130</span>,calendar.w_date,<span class="n">2</span>,<span class="n">16</span>);
    <span class="k">switch</span>(calendar.week)
    {</div></div>
<div class="a" style="left:380px;top:233px;width:1px;height:13px;background:#9a9a9a"></div>
<div class="a" style="left:378px;top:233px;width:5px;height:1px;background:#9a9a9a"></div>
<div class="a" style="left:378px;top:245px;width:5px;height:1px;background:#9a9a9a"></div>
<svg class="a" style="left:244px;top:144px;" width="9" height="8" viewBox="0 0 9 8"><path d="M4.5 0.3L8.8 7.7H0.2Z" fill="#e9cf2a" stroke="#c8a810" stroke-width=".5"/><path d="M4.5 2.5v3" stroke="#554" stroke-width="1"/></svg>
<svg class="a" style="left:244px;top:154px;" width="9" height="8" viewBox="0 0 9 8"><path d="M4.5 0.3L8.8 7.7H0.2Z" fill="#e9cf2a" stroke="#c8a810" stroke-width=".5"/><path d="M4.5 2.5v3" stroke="#554" stroke-width="1"/></svg>
<svg class="a" style="left:244px;top:163px;" width="9" height="8" viewBox="0 0 9 8"><path d="M4.5 0.3L8.8 7.7H0.2Z" fill="#e9cf2a" stroke="#c8a810" stroke-width=".5"/><path d="M4.5 2.5v3" stroke="#554" stroke-width="1"/></svg>
<svg class="a" style="left:244px;top:172px;" width="9" height="8" viewBox="0 0 9 8"><path d="M4.5 0.3L8.8 7.7H0.2Z" fill="#e9cf2a" stroke="#c8a810" stroke-width=".5"/><path d="M4.5 2.5v3" stroke="#554" stroke-width="1"/></svg>
<svg class="a" style="left:244px;top:201px;" width="9" height="8" viewBox="0 0 9 8"><path d="M4.5 0.3L8.8 7.7H0.2Z" fill="#e9cf2a" stroke="#c8a810" stroke-width=".5"/><path d="M4.5 2.5v3" stroke="#554" stroke-width="1"/></svg>
<svg class="a" style="left:244px;top:210px;" width="9" height="8" viewBox="0 0 9 8"><path d="M4.5 0.3L8.8 7.7H0.2Z" fill="#e9cf2a" stroke="#c8a810" stroke-width=".5"/><path d="M4.5 2.5v3" stroke="#554" stroke-width="1"/></svg>
<div class="a" style="left:0px;top:388px;width:910px;height:2px;background:#fafafa"></div>
<div class="a" style="left:0px;top:390px;width:910px;height:11px;background:linear-gradient(#cddbec,#e8f0f9)"></div>
<div class="t" style="left:3px;top:392.94px;color:#283448;font-family:'Liberation Sans',sans-serif;font-size:7.8px;font-weight:bold;transform:scaleX(0.8050)">Build Output</div>
<svg class="a" style="left:890px;top:392px;" width="6" height="8" viewBox="0 0 6 8"><path d="M1 0h4v4h-4zM0 4h6M3 4v4" stroke="#222" fill="#222"/></svg>
<div class="a" style="left:900px;top:391px;width:9px;height:10px;background:#e05a40;border:1px solid #c04030"></div>
<div class="a" style="left:903px;top:394px;width:3px;height:4px;background:#fff;opacity:.8"></div>
<div class="a" style="left:0px;top:401px;width:910px;height:3px;background:#fafafa"></div>
<div class="a" style="left:0px;top:404px;width:910px;height:1px;background:#8a8a8a"></div>
<div class="a" style="left:2px;top:404px;width:1px;height:77px;background:#999"></div>
<div class="a" style="left:3px;top:405px;width:894px;height:76px;background:#fff"></div>
<div class="a" style="left:897px;top:405px;width:12px;height:76px;background:#fcfcfc"></div>
<svg class="a" style="left:899px;top:408px;" width="7" height="5" viewBox="0 0 7 5"><path d="M0.5 4l3-3 3 3" stroke="#445" fill="none" stroke-width="1.2"/></svg>
<div class="a" style="left:898px;top:449px;width:9px;height:10px;background:#c8c8c8"></div>
<svg class="a" style="left:889px;top:472px;" width="5" height="7" viewBox="0 0 5 7"><path d="M1 0.5l3 3-3 3" stroke="#889" fill="none" stroke-width="1.1"/></svg>
<svg class="a" style="left:899px;top:463px;" width="7" height="5" viewBox="0 0 7 5"><path d="M0.5 1l3 3 3-3" stroke="#445" fill="none" stroke-width="1.2"/></svg>
<div class="a" style="left:2px;top:443px;width:895px;height:10px;background:#0b64da"></div>
<div class="bo" style="left:5px;top:405.5px">compiling usmart_str.c...
linking...
Program Size: Code=37584 RO-data=6708 RW-data=372 ZI-data=1860
FromELF: creating hex file...
<span style="color:#dfe8f8;-webkit-text-stroke:0.25px #dfe8f8">&quot;..\OBJ\RTC.axf&quot; - 0 Error(s), 0 Warning(s).</span>
Build Time Elapsed:  00:00:21</div>
<div class="a" style="left:0px;top:481px;width:910px;height:1px;background:#333"></div>
<div class="a" style="left:0px;top:482px;width:910px;height:9px;background:#f4f4f4"></div>
<div class="a" style="left:1px;top:482px;width:57px;height:13px;background:#fff;border:1px solid #444;border-top:none"></div>
<svg class="a" style="left:4px;top:484px;" width="8" height="8" viewBox="0 0 8 8"><rect x="0.5" y="0.5" width="7" height="7" fill="#e8e8f0" stroke="#667"/></svg>
<div class="t" style="left:14px;top:484.60px;color:#111;font-family:'Liberation Sans',sans-serif;font-size:7.5px;-webkit-text-stroke:0.2px #111;position:absolute;z-index:5;transform:scaleX(0.9932)">Build Output</div>
<svg class="a" style="left:61px;top:484px;" width="8" height="8" viewBox="0 0 8 8"><rect x="0.5" y="0.5" width="7" height="7" fill="#e8e8f0" stroke="#888"/></svg>
<div class="t" style="left:70px;top:485.38px;color:#aaa;font-family:'Liberation Sans',sans-serif;font-size:6px;;transform:scaleX(1.1356)">Browser</div>
<div class="a" style="left:0px;top:491px;width:910px;height:16px;background:#f0f0f0"></div>
<div class="t" style="left:605px;top:498.36px;color:#222;font-family:'Liberation Sans',sans-serif;font-size:7px;;transform:scaleX(0.8821)">J-LINK / J-TRACE Cortex</div>
<div class="t" style="left:770px;top:498.36px;color:#222;font-family:'Liberation Sans',sans-serif;font-size:7px;;transform:scaleX(0.8893)">L:44 C:21</div>
<div class="t" style="left:824px;top:498.36px;color:#999;font-family:'Liberation Sans',sans-serif;font-size:7px;;transform:scaleX(0.8330)">CAP</div>
<div class="t" style="left:839px;top:498.36px;color:#222;font-family:'Liberation Sans',sans-serif;font-size:7px;;transform:scaleX(1.0029)">NUM</div>
<div class="t" style="left:859px;top:498.36px;color:#999;font-family:'Liberation Sans',sans-serif;font-size:7px;;transform:scaleX(0.8027)">SCRL</div>
<div class="t" style="left:877px;top:498.36px;color:#999;font-family:'Liberation Sans',sans-serif;font-size:7px;;transform:scaleX(0.8568)">OVR</div>
<div class="t" style="left:894px;top:498.36px;color:#999;font-family:'Liberation Sans',sans-serif;font-size:7px;;transform:scaleX(0.9552)">R/W</div>
<div class="a" style="left:0px;top:507px;width:910px;height:23px;background:#e4e4e4"></div>
<div class="a" style="left:0px;top:507px;width:232px;height:23px;background:#dcdcdc"></div>
<div class="a" style="left:232px;top:507px;width:678px;height:23px;background:#e8e8e8"></div>
<svg class="a" style="left:10px;top:514px;" width="9" height="9" viewBox="0 0 9 9"><path d="M0 0h4v4h-4zM5 0h4v4h-5zM0 5h4v4h-4zM5 5h4v4h-4z" fill="#111"/></svg>
<svg class="a" style="left:39px;top:512px;" width="8" height="8" viewBox="0 0 8 8"><circle cx="4" cy="4" r="3" fill="none" stroke="#333" stroke-width="1.2"/></svg>
<div class="t" style="left:52px;top:514.84px;color:#444;font-family:'Liberation Sans',sans-serif;font-size:8px;;transform:scaleX(1.1250)">在这里输入你要搜索的内容</div>
<svg class="a" style="left:241px;top:513px;" width="10" height="10" viewBox="0 0 10 10"><circle cx="5" cy="5" r="3.8" fill="none" stroke="#111" stroke-width="1.6"/></svg>
<svg class="a" style="left:270px;top:513px;" width="9" height="9" viewBox="0 0 9 9"><rect x="1" y="1" width="6" height="7" fill="none" stroke="#222" stroke-width="1.3"/><path d="M8.5 1v7" stroke="#222"/></svg>
<svg class="a" style="left:296px;top:512px;" width="12" height="11" viewBox="0 0 12 11"><path d="M1 1h10" stroke="#e0c040" stroke-width="2"/><rect x="1" y="3" width="10" height="3" fill="#6ab04a"/><path d="M2 6v5M10 6v5" stroke="#3a8ac0" stroke-width="2"/></svg>
<svg class="a" style="left:320px;top:511px;" width="13" height="13" viewBox="0 0 13 13"><circle cx="6.5" cy="6.5" r="6.2" fill="#1f7ad0"/><path d="M3 7a4 3 0 0 1 8 0h-5" stroke="#8fd0f0" stroke-width="1.5" fill="none"/></svg>
<div class="t" style="left:335px;top:515.10px;color:#222;font-family:'Liberation Sans',sans-serif;font-size:7.5px;;transform:scaleX(1.0993)">(1条...</div>
<svg class="a" style="left:370px;top:511px;" width="13" height="13" viewBox="0 0 13 13"><circle cx="6.5" cy="6.5" r="6.2" fill="#2a2a30"/><path d="M5 3h2v7h3" stroke="#d8b040" stroke-width="1.5" fill="none"/></svg>
<div class="t" style="left:385px;top:515.10px;color:#222;font-family:'Liberation Sans',sans-serif;font-size:7.5px;;transform:scaleX(1.0027)">Leag...</div>
<svg class="a" style="left:419px;top:511px;" width="13" height="13" viewBox="0 0 13 13"><circle cx="6.5" cy="6.5" r="6.2" fill="#1a2a50"/><path d="M3 9l3-5 4 5z" fill="#c0d0f0"/></svg>
<div class="t" style="left:434px;top:515.10px;color:#222;font-family:'Liberation Sans',sans-serif;font-size:7.5px;;transform:scaleX(1.0622)">20留...</div>
<div class="a" style="left:462px;top:507px;width:54px;height:23px;background:#e0e0e0"></div>
<svg class="a" style="left:470px;top:511px;" width="12" height="12" viewBox="0 0 12 12"><rect x="0.5" y="0.5" width="11" height="11" fill="#3a4a40" stroke="#222"/><rect x="2" y="2" width="8" height="4" fill="#dfe"/></svg>
<div class="t" style="left:485px;top:515.10px;color:#222;font-family:'Liberation Sans',sans-serif;font-size:7.5px;;transform:scaleX(1.0075)">D:\A...</div>
<svg class="a" style="left:520px;top:511px;" width="12" height="12" viewBox="0 0 12 12"><rect width="12" height="12" fill="#2060b8"/><path d="M1 9l3-5 2 3 2-3 3 5" stroke="#fff" stroke-width="1.5" fill="none"/></svg>
<svg class="a" style="left:534px;top:512px;" width="12" height="10" viewBox="0 0 12 10"><rect x="0" y="2" width="10" height="7" fill="#333"/></svg>
<svg class="a" style="left:569px;top:510px;" width="14" height="14" viewBox="0 0 14 14"><rect width="14" height="14" fill="#c83030"/><text x="7" y="7" font-size="5.5" text-anchor="middle" font-family="Liberation Sans" font-weight="bold" fill="#fff">ATK</text></svg>
<div class="t" style="left:585px;top:515.10px;color:#222;font-family:'Liberation Sans',sans-serif;font-size:7.5px;;transform:scaleX(0.8439)">XCO...</div>
<svg class="a" style="left:619px;top:510px;" width="13" height="13" viewBox="0 0 13 13"><rect width="13" height="13" fill="#d8d0a0"/><path d="M2 3l4 4 5-5-2 8-3-2z" fill="#203a90"/></svg>
<div class="t" style="left:635px;top:515.10px;color:#222;font-family:'Liberation Sans',sans-serif;font-size:7.5px;;transform:scaleX(1.1111)">FlyM...</div>
<svg class="a" style="left:671px;top:516px;" width="8" height="5" viewBox="0 0 8 5"><path d="M0.5 4.5l3.5-3.5 3.5 3.5" stroke="#222" fill="none" stroke-width="1.1"/></svg>
<svg class="a" style="left:690px;top:513px;" width="7" height="10" viewBox="0 0 7 10"><path d="M1 0h5v6h-5z" fill="#111"/><path d="M0 6h7l-3.5 4z" fill="#111"/></svg>
<svg class="a" style="left:707px;top:513px;" width="11" height="10" viewBox="0 0 11 10"><rect x="0.5" y="0.5" width="10" height="9" fill="#b8b070" stroke="#333"/></svg>
<svg class="a" style="left:725px;top:514px;" width="9" height="8" viewBox="0 0 9 8"><path d="M0 3h2l3-3v8l-3-3h-2z" fill="#444"/><path d="M6.5 2.5a2 2 0 0 1 0 3" stroke="#444" fill="none"/></svg>
<svg class="a" style="left:744px;top:514px;" width="8" height="8" viewBox="0 0 8 8"><path d="M1 7h1M3 7v-2M5 7v-4M7 7v-6" stroke="#555"/></svg>
<svg class="a" style="left:764px;top:514px;" width="10" height="7" viewBox="0 0 10 7"><rect width="10" height="7" fill="#222"/></svg>
<svg class="a" style="left:783px;top:513px;" width="10" height="10" viewBox="0 0 10 10"><circle cx="5" cy="5" r="4.2" fill="none" stroke="#333" stroke-width="1.2"/><path d="M1 5h8M5 1v8" stroke="#333"/></svg>
<svg class="a" style="left:805px;top:512px;" width="10" height="11" viewBox="0 0 10 11"><circle cx="3" cy="8" r="2.2" fill="none" stroke="#333"/><path d="M5 8l4-7" stroke="#333"/></svg>
<div class="t" style="left:822px;top:514.32px;color:#222;font-family:'Liberation Sans',sans-serif;font-size:9px;;transform:scaleX(1.2222)">中</div>
<div class="t" style="left:847px;top:509.36px;color:#222;font-family:'Liberation Sans',sans-serif;font-size:7px;;transform:scaleX(0.8556)">21:14</div>
<div class="t" style="left:840px;top:519.36px;color:#222;font-family:'Liberation Sans',sans-serif;font-size:7px;;transform:scaleX(0.9701)">2020/12/10</div>
<div class="a" style="left:0px;top:395px;width:910px;height:135px;background:linear-gradient(rgba(0,0,0,0) 0%,rgba(0,0,0,0.13) 30%,rgba(0,0,0,0.33) 60%,rgba(0,0,0,0.42) 78%,rgba(0,0,0,0.47) 100%)"></div>
<div class="a" style="left:0px;top:530px;width:1024px;height:19px;background:#000"></div>
<div class="a" style="left:16px;top:484px;width:664px;height:4px;background:#74a6d8;opacity:.85"></div>
<div class="a" style="left:16px;top:488px;width:664px;height:3px;background:rgba(200,150,100,.3)"></div>
<div class="a" style="left:57px;top:491px;width:623px;height:4px;background:rgba(150,160,200,.25)"></div>
<div class="a" style="left:680px;top:485px;width:230px;height:2px;background:rgba(255,255,255,.25)"></div>
<div class="a" style="left:910px;top:485px;width:98px;height:1px;background:#5a5a5a"></div>
<svg class="a" style="left:672px;top:479px;" width="16" height="16" viewBox="0 0 16 16"><circle cx="8" cy="8" r="6" fill="none" stroke="#6aa6da" stroke-width="2"/><circle cx="8" cy="8" r="2" fill="#d8904a"/></svg>
<div class="t" style="left:16px;top:495.58px;color:#f6f6f6;font-family:'Liberation Sans',sans-serif;font-size:8.5px;-webkit-text-stroke:0.2px #f6f6f6;transform:scaleX(0.8811)">0:15:56</div>
<div class="t" style="left:983px;top:495.58px;color:#f6f6f6;font-family:'Liberation Sans',sans-serif;font-size:8.5px;-webkit-text-stroke:0.2px #f6f6f6;transform:scaleX(0.8811)">0:07:48</div>
<svg class="a" style="left:25px;top:516px;" width="15" height="13" viewBox="0 0 15 13"><path d="M1 4h3l4-3v11l-4-3h-3z" fill="none" stroke="#fff" stroke-width="1.2"/><path d="M10 4a3 3 0 0 1 0 5M12 2a6 6 0 0 1 0 9" stroke="#fff" fill="none" stroke-width="1.2"/></svg>
<svg class="a" style="left:59px;top:516px;" width="15" height="14" viewBox="0 0 15 14"><path d="M1 1h13v9h-8l-3 3v-3h-2z" fill="none" stroke="#fff" stroke-width="1.2"/><path d="M4 4h7M4 7h7" stroke="#fff"/></svg>
<svg class="a" style="left:470px;top:516px;" width="14" height="10" viewBox="0 0 14 10"><path d="M2 8a5 5 0 0 1 10 -3" stroke="#fff" fill="none" stroke-width="1.2"/><path d="M1 4l1 4 3-2z" fill="#fff"/></svg>
<div class="t" style="left:474px;top:522.36px;color:#fff;font-family:'Liberation Sans',sans-serif;font-size:7px;;transform:scaleX(1.0261)">10</div>
<div class="a" style="left:509px;top:517px;width:1.6px;height:11px;background:#f0f0f0"></div>
<div class="a" style="left:513px;top:517px;width:1.6px;height:11px;background:#f0f0f0"></div>
<svg class="a" style="left:539px;top:516px;" width="14" height="10" viewBox="0 0 14 10"><path d="M12 8a5 5 0 0 0 -10 -3" stroke="#fff" fill="none" stroke-width="1.2"/><path d="M13 4l-1 4-3-2z" fill="#fff"/></svg>
<div class="t" style="left:542px;top:522.36px;color:#fff;font-family:'Liberation Sans',sans-serif;font-size:7px;;transform:scaleX(1.1543)">30</div>
<svg class="a" style="left:847px;top:515px;" width="15" height="15" viewBox="0 0 15 15"><path d="M2 13l10-10 2 2-10 10-3 1z" fill="none" stroke="#fff" stroke-width="1.3"/></svg>
<svg class="a" style="left:883px;top:513px;" width="15" height="15" viewBox="0 0 15 15"><rect x="3" y="0.5" width="9" height="4" fill="#111" stroke="#ddd" stroke-width=".6"/><rect x="1" y="5" width="13" height="9" fill="none" stroke="#f0f0f0" stroke-width="1.4"/><rect x="7" y="8" width="5" height="4" fill="#ccc"/></svg>
<div class="t" style="left:918px;top:517.60px;color:#fff;font-family:'Liberation Sans',sans-serif;font-size:7.5px;font-weight:bold;transform:scaleX(1.0387)">360</div>
<svg class="a" style="left:916px;top:524px;" width="17" height="6" viewBox="0 0 17 6"><path d="M1 1a7.5 3.5 0 0 0 15 0" stroke="#fff" fill="none"/><circle cx="8.5" cy="4.5" r="1" fill="#fff"/><circle cx="16" cy="-6" r="1" fill="none" stroke="#fff" stroke-width=".7"/></svg>
<svg class="a" style="left:950px;top:516px;" width="14" height="14" viewBox="0 0 14 14"><path d="M1 13l12-12M8 1h5v5M1 8v5h5" stroke="#fff" fill="none" stroke-width="1.4"/></svg>
<div class="a" style="left:985px;top:522px;width:2px;height:2px;background:#fff"></div>
<div class="a" style="left:991px;top:522px;width:2px;height:2px;background:#fff"></div>
<div class="a" style="left:997px;top:522px;width:2px;height:2px;background:#fff"></div>
<div class="t" style="left:938px;top:45.84px;color:#cfcfcf;font-family:'Liberation Sans',sans-serif;font-size:8px;;transform:scaleX(0.9752)">万辉1906040330</div>
<div class="a" style="left:886px;top:50px;width:20px;height:17px;background:#2b8ee2;border-radius:2px 0 0 2px"></div>
<svg class="a" style="left:889px;top:52px;" width="14" height="12" viewBox="0 0 14 12"><circle cx="7" cy="4" r="2.8" fill="none" stroke="#fff" stroke-width="1.6"/><circle cx="4" cy="8.5" r="2.8" fill="none" stroke="#fff" stroke-width="1.6"/><circle cx="10" cy="8.5" r="2.8" fill="none" stroke="#fff" stroke-width="1.6"/></svg>
<div class="a" style="left:906px;top:50px;width:49px;height:17px;background:#cde5fb;border-radius:0 2px 2px 0"></div>
<div class="t" style="left:913px;top:54.34px;color:#4a8fd4;font-family:'Liberation Sans',sans-serif;font-size:8px;;transform:scaleX(1.1562)">拖拽上传</div>
<svg class="a" style="left:12px;top:6px;" width="10" height="9" viewBox="0 0 10 9"><path d="M9 4.4h-8.2M3.8 1l-3.2 3.4 3.2 3.4" stroke="#f4f4f4" fill="none" stroke-width="1.3"/></svg>
<div class="a" style="left:944px;top:10px;width:8px;height:1px;background:#e0e0e0"></div>
<svg class="a" style="left:975px;top:7px;" width="8" height="7" viewBox="0 0 8 7"><rect x="0.5" y="1.5" width="5.5" height="5" fill="none" stroke="#e0e0e0"/><path d="M2 1.5v-1h5v5h-1" fill="none" stroke="#e0e0e0"/></svg>
<svg class="a" style="left:1005px;top:7px;" width="8" height="7" viewBox="0 0 8 7"><path d="M0.5 0.5l7 6.5M7.5 0.5l-7 6.5" stroke="#e0e0e0" stroke-width="1"/></svg>
</body></html>
